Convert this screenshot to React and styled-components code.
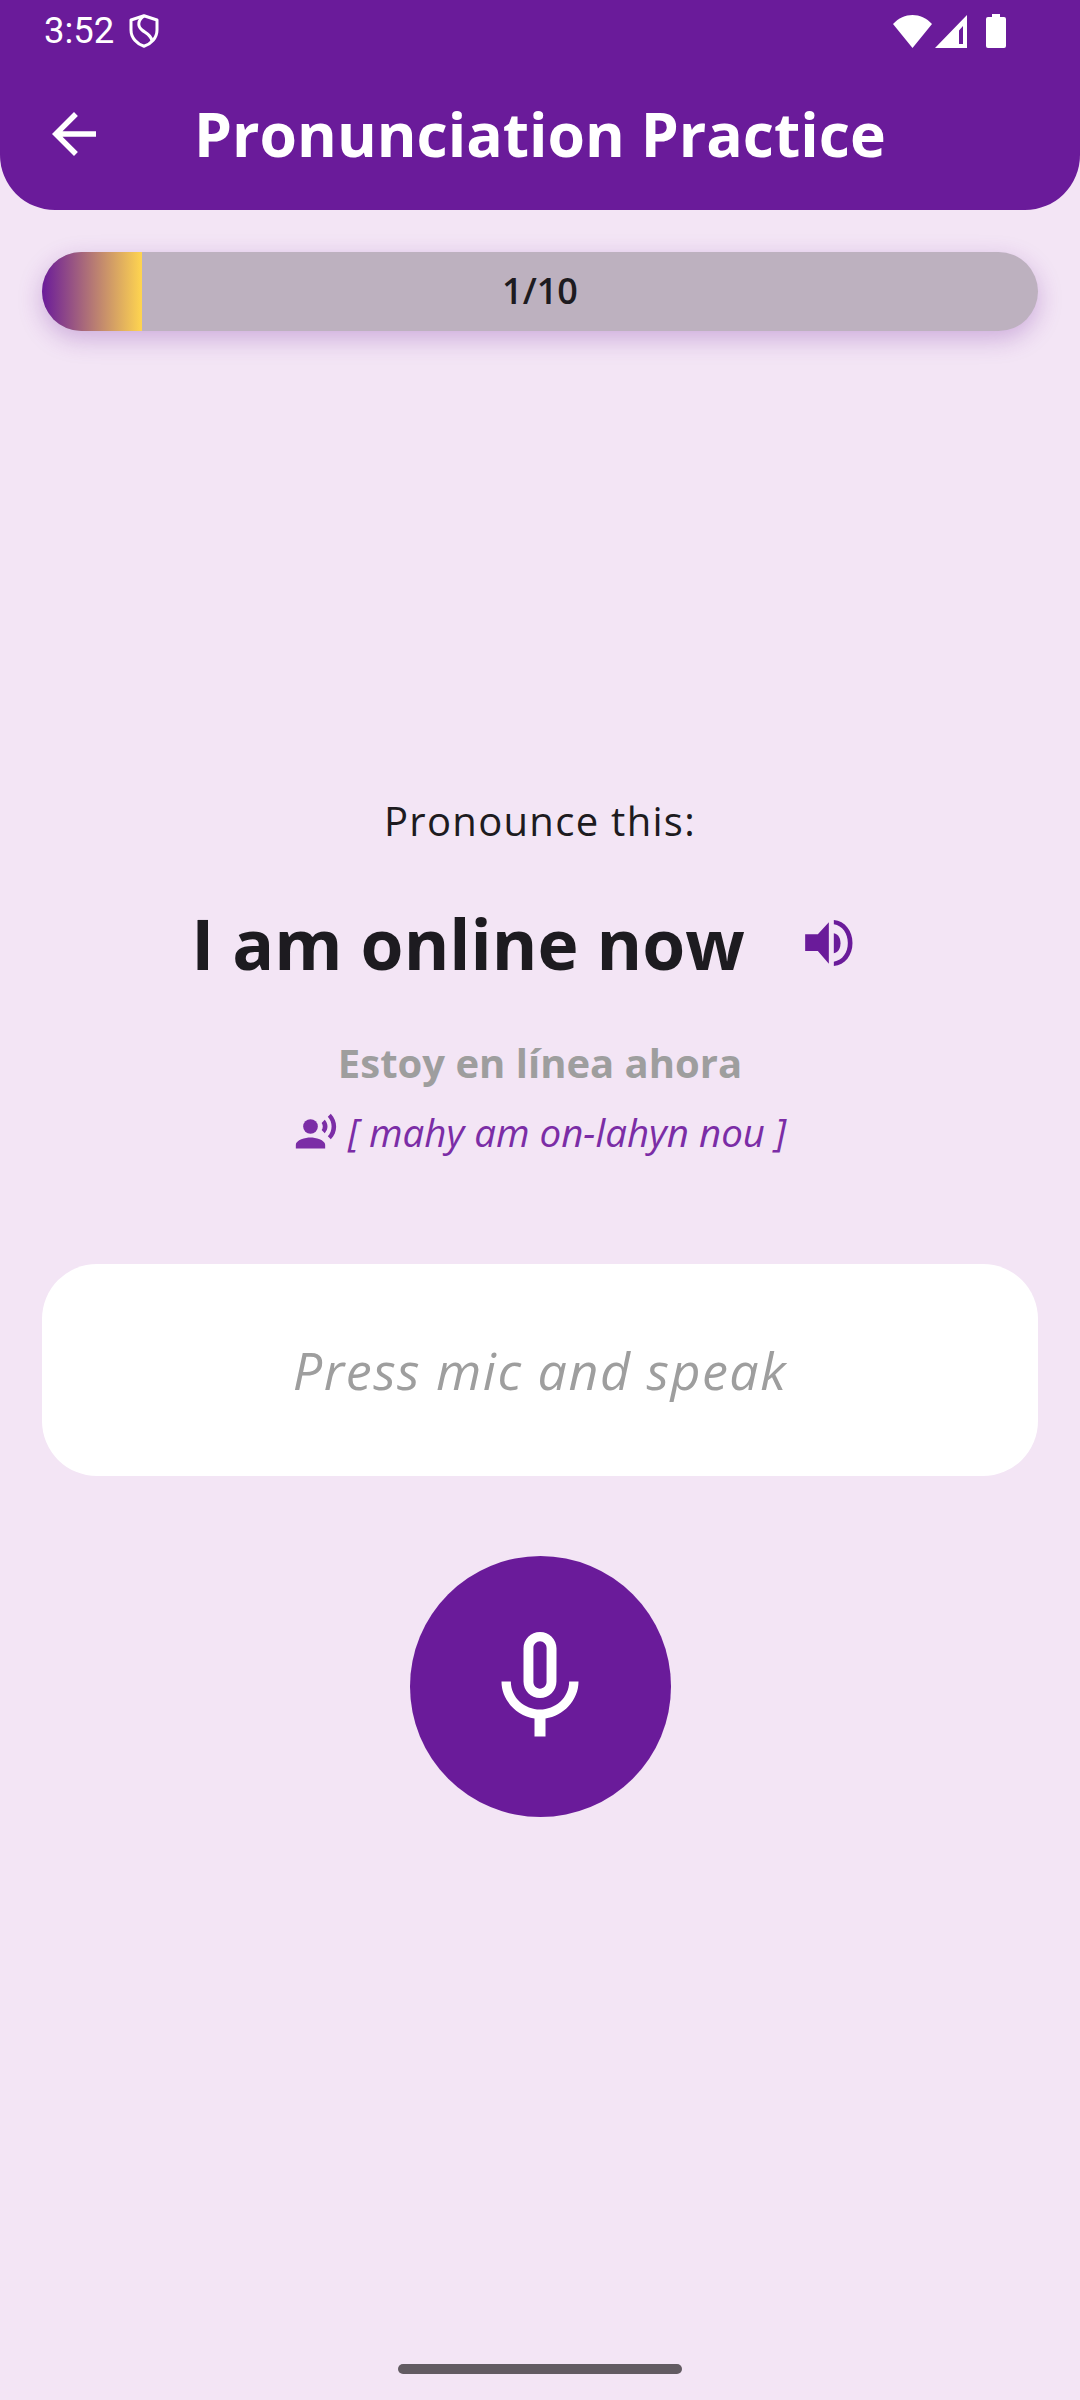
import React from 'react';
import styled, { createGlobalStyle } from 'styled-components';
import { MdArrowBack, MdMicNone, MdRecordVoiceOver } from 'react-icons/md';

const Global = createGlobalStyle`
  html, body { margin: 0; padding: 0; background: #f3e5f5; }
  * { box-sizing: border-box; }
`;
const FONT = `"Open Sans", "Noto Sans", sans-serif`;

const Screen = styled.div`
  width: 1080px; height: 2400px; background: #f3e5f5; display: flex; flex-direction: column;
  align-items: center; font-family: ${FONT}; overflow: hidden;
`;
const Header = styled.header`
  width: 100%; height: 210px; flex: none; background: #6a1b9a; color: #fff;
  border-radius: 0 0 55px 55px; padding: 14px 74px 0 44px; display: flex; flex-direction: column;
`;
const StatusBar = styled.div`
  height: 34px; display: flex; align-items: center; justify-content: space-between;
`;
const StatusLeft = styled.div`
  display: flex; align-items: center; gap: 15px; font: 400 36.5px/34px Roboto, sans-serif;
`;
const StatusRight = styled.div`
  display: flex; align-items: center; gap: 0;
`;
const AppBar = styled.div`
  display: flex; align-items: center; margin-top: 53px; height: 66px;
`;
const BackButton = styled.div`
  width: 56px; margin-left: 2px; margin-right: 92px; display: flex; align-items: center; justify-content: center;
  svg { display: block; flex: none; }
`;
const Title = styled.h1`
  margin: 0; font: 700 60.6px/66px ${FONT}; white-space: nowrap;
`;
const Track = styled.div`
  position: relative; width: 996px; height: 79px; margin-top: 42px; flex: none; border-radius: 40px;
  background: #bdb1bf; box-shadow: 0 8px 24px rgba(106, 27, 154, 0.28); overflow: hidden;
  display: flex; align-items: center; justify-content: center;
`;
const Fill = styled.div`
  position: absolute; left: 0; top: 0; bottom: 0;
  background: linear-gradient(90deg, #6a1b9a, #ffd54f);
`;
const TrackLabel = styled.span`
  position: relative; top: -1px; font: 600 36px/79px ${FONT}; color: #1d1b20;
`;
const Prompt = styled.div`
  margin-top: 465px; font: 400 40px/50px ${FONT}; letter-spacing: 1.3px; color: #1d1b20;
`;
const PhraseRow = styled.div`
  display: flex; align-items: center; margin-top: 57px; height: 80px; margin-right: 36px; gap: 60px;
`;
const Phrase = styled.div`
  font: 700 69.5px/80px ${FONT}; color: #1d1b20; white-space: nowrap;
`;
const Translation = styled.div`
  margin-top: 55px; font: 700 40px/50px ${FONT}; color: #9e9e9e;
`;
const Phonetic = styled.div`
  display: flex; align-items: center; gap: 10px; margin-top: 19px; color: #7b2da6;
  font: italic 400 38.5px/50px ${FONT};
  svg { display: block; flex: none; }
`;
const AnswerCard = styled.div`
  width: 996px; height: 212px; margin-top: 107px; flex: none; background: #fff; border-radius: 55px;
  display: flex; align-items: center; justify-content: center;
  font: italic 400 52px/60px ${FONT}; letter-spacing: 1.5px; color: #9e9e9e;
`;
const MicButton = styled.div`
  width: 261px; height: 261px; margin-top: 80px; flex: none; border-radius: 50%; background: #6a1b9a; color: #fff;
  display: flex; align-items: center; justify-content: center;
  svg { display: block; }
`;
const HomeBar = styled.div`
  width: 284px; height: 10px; margin-top: 547px; flex: none; border-radius: 5px; background: #625b62;
`;

const Shield = () => (
  <svg width="30" height="34" viewBox="0 0 30 34" fill="none" stroke="#fff" strokeWidth="3">
    <path d="M15 1.8 L28 6 V16 C28 24 22 30 15 32.3 C8 30 2 24 2 16 V6 Z" strokeLinejoin="round" />
    <path d="M15 2 C9 6 8 12 13 16 C18 20 22 21 23 27" />
  </svg>
);
const Wifi = () => (
  <svg width="39" height="33" viewBox="0 0 39 33" fill="#fff" style={{ marginRight: 3 }}>
    <path d="M0 9 C11 -3 28 -3 39 9 L19.5 33 Z" />
  </svg>
);
const Signal = () => (
  <svg width="32" height="33" viewBox="0 0 32 33" fill="#fff" fillRule="evenodd" style={{ marginRight: 19 }}>
    <path d="M32 0 V33 H0 Z M28 11 L24 15.5 V29 H28 Z" />
  </svg>
);
const Battery = () => (
  <svg width="20" height="34" viewBox="0 0 20 34" fill="#fff">
    <path d="M6 0 H14 V3 H18 Q20 3 20 5 V32 Q20 34 18 34 H2 Q0 34 0 32 V5 Q0 3 2 3 H6 Z" />
  </svg>
);
const Speaker = () => (
  <svg width="48" height="46" viewBox="72 65 143 138" fill="#6a1b9a">
    <path d="M72 108 H110 L143 72 V196 L110 158 H72 Z" />
    <path d="M158 105 C172 108 178 120 178 135 C178 150 172 162 158 165 Z" />
    <path d="M158 65 C192 68 214 98 214 134 C214 170 192 200 158 203 V190 C184 186 200 162 200 134 C200 106 184 82 158 78 Z" />
  </svg>
);

export default function App() {
  return (
    <Screen>
      <Global />
      <Header>
        <StatusBar>
          <StatusLeft>3:52 <Shield /></StatusLeft>
          <StatusRight><Wifi /><Signal /><Battery /></StatusRight>
        </StatusBar>
        <AppBar>
          <BackButton><MdArrowBack size={66} /></BackButton>
          <Title>Pronunciation Practice</Title>
        </AppBar>
      </Header>
      <Track>
        <Fill style={{ width: `${100 / 996 * 100}%` }} />
        <TrackLabel>1/10</TrackLabel>
      </Track>
      <Prompt>Pronounce this:</Prompt>
      <PhraseRow>
        <Phrase>I am online now</Phrase>
        <Speaker />
      </PhraseRow>
      <Translation>Estoy en línea ahora</Translation>
      <Phonetic><MdRecordVoiceOver size={44} />[ mahy am on-lahyn nou ]</Phonetic>
      <AnswerCard>Press mic and speak</AnswerCard>
      <MicButton><MdMicNone size={132} /></MicButton>
      <HomeBar />
    </Screen>
  );
}
